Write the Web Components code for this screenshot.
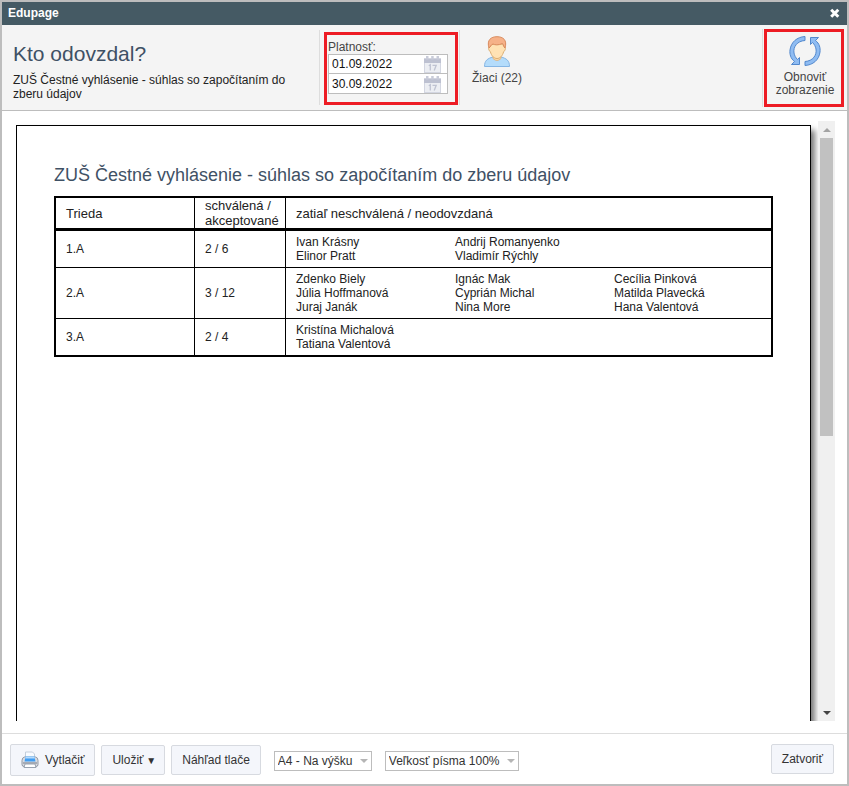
<!DOCTYPE html>
<html lang="sk">
<head>
<meta charset="utf-8">
<title>Edupage</title>
<style>
html, body { height: 100%; margin: 0; }
body { font-family: "Liberation Sans", Arial, sans-serif; font-size: 12px; line-height: 14px; color: #222; }
</style>
</head>
<body>
<report-dialog></report-dialog>

<script>
const define = (name, markup, setup) => {
  const template = document.createElement('template');
  template.innerHTML = '<style>*{box-sizing:border-box}</style>' + markup;
  customElements.define(name, class extends HTMLElement {
    constructor() {
      super();
      this.attachShadow({ mode: 'open' }).append(template.content.cloneNode(true));
    }
    connectedCallback() { if (setup) setup(this, this.shadowRoot); }
  });
};

define('title-bar', `
<style>
:host { display: flex; justify-content: space-between; align-items: center; height: 23px; padding: 0 6px 1px 6px; background: #455a64; color: #fff; flex: none; box-sizing: border-box; }
h1 { margin: 0; font-size: 12px; line-height: 14px; font-weight: bold; }
button { display: flex; border: 0; padding: 0; background: none; color: inherit; }
</style>
<h1><slot></slot></h1>
<button type="button" aria-label="Zavrieť"><svg width="12" height="12" viewBox="0 0 12 12"><path d="M2.2 2.7 9.3 9.8M9.3 2.7 2.2 9.8" stroke="#fff" stroke-width="3"/></svg></button>
`);

define('highlight-frame', `
<style>
:host { display: block; border: 3px solid #ed1c24; box-sizing: border-box; flex: none; }
</style>
<slot></slot>
`);

define('date-field', `
<style>
:host { display: flex; align-items: center; height: 20px; width: 120px; border: 1px solid #bdbdbd; background: #fff; padding: 0 5px 0 3px; box-sizing: border-box; }
:host(:not(:first-of-type)) { height: 21px; margin-top: -1px; }
input { flex: 1; min-width: 0; height: 16px; border: 0; padding: 0; font: inherit; color: #111; background: none; outline: 0; }
svg { flex: none; }
</style>
<input type="text">
<svg width="19" height="18" viewBox="0 0 19 18">
<rect x="1.5" y="4" width="16" height="13.500" fill="#eceef3" stroke="#d3d6e1"/>
<path d="M1 3.500h17V8H1z" fill="#bdc1d1"/>
<path d="M3 1h2.500v3.500H3zM8.200 1h2.500v3.500H8.200zM13.500 1H16v3.500h-2.500z" fill="#c9ccd9"/>
<path d="M5.800 10.800l1.500-1v5.700M9.500 10.300h3.700l-2 5.200" fill="none" stroke="#bfc3d2" stroke-width="1.300"/>
</svg>
`, (host, root) => {
  const input = root.querySelector('input');
  input.value = host.getAttribute('value');
  input.setAttribute('aria-label', host.getAttribute('label'));
});

define('tool-button', `
<style>
:host { display: block; }
button { display: flex; flex-direction: column; align-items: center; gap: 3px; width: 100%; border: 0; padding: 0; background: none; font: inherit; color: #444; line-height: inherit; text-align: center; }
::slotted(svg) { display: block; }
</style>
<button type="button"><slot name="icon"></slot><span><slot></slot></span></button>
`);

define('report-toolbar', `
<style>
:host { display: flex; height: 86px; background: #f4f4f4; border-bottom: 1px solid #bdbdbd; flex: none; box-sizing: border-box; }
.heading { width: 317px; padding: 17px 30px 0 11px; flex: none; }
h2 { margin: 0 0 7px; font-size: 21px; line-height: 24px; font-weight: normal; color: #3f5165; }
p { margin: 0; color: #222; }
.group { border-left: 1px solid #ddd; height: 75px; margin-top: 5px; }
.dates { width: 140px; flex: none; padding: 2px 0 0 4px; }
.dates highlight-frame { width: 134px; height: 73px; padding: 5px 0 0 1px; color: #444; }
.people { flex: 1; padding: 6px 0 0 7px; }
.people tool-button { width: 60px; }
.refresh { width: 85px; flex: none; margin-top: 4px; padding-left: 1px; height: 78px; }
.refresh highlight-frame { width: 80px; height: 78px; padding: 2px 0 0 2px; line-height: 14px; }
.refresh tool-button { line-height: 13px; }
</style>
<div class="heading"><h2>Kto odovzdal?</h2><p>ZUŠ Čestné vyhlásenie - súhlas so započítaním do zberu údajov</p></div>
<div class="group dates"><highlight-frame>Platnosť:<date-field value="01.09.2022" label="Platnosť od"></date-field><date-field value="30.09.2022" label="Platnosť do"></date-field></highlight-frame></div>
<div class="group people"><tool-button>
<svg slot="icon" width="32" height="32" viewBox="0 0 32 32">
<path d="M3.500 30.500c0-6 3-8 8.500-9.500h8c5.500 1.500 8.500 3.500 8.500 9.500z" fill="#b4dcfb" stroke="#86b6e4"/>
<path d="M12 20v2.500q4 4 8 0V20z" fill="#ffdba8" stroke="#dfb076" stroke-width=".8"/>
<path d="M8.500 11c-1.500 0-1 4 .8 4.500C10.500 20 13 22.500 16 22.500s5.500-2.500 6.700-7c1.800-.5 2.300-4.500.8-4.500C22 6 10 6 8.500 11z" fill="#ffe2b4" stroke="#dcae72"/>
<path d="M8 12C5.500 4 10 .7 16 .7S26.500 4 24 12c-1.500-1-1-3-2.500-4.500C17 9.500 14 9 12 8c-2 .5-2.500 3-4 4z" fill="#f6b188" stroke="#d98a5c"/>
</svg>Žiaci (22)</tool-button></div>
<div class="group refresh"><highlight-frame><tool-button>
<svg slot="icon" width="34" height="34" viewBox="0 0 34 34" fill="#8fbcf2" stroke="#5288cd" stroke-linejoin="round">
<path d="M17 2.500v4C9 7 5 13 6 19c.5 2.500 1.500 4.500 3.500 6.500l2-2v7H3.500l3-3C2.500 24.500 1.500 20 2 16 3 8 9 3 17 2.500z"/>
<path d="M17 31.500v-4C25 27 29 21 28 15c-.5-2.500-1.500-4.500-3.500-6.500l-2 2v-7h8l-3 3C31.500 9.500 32.500 14 32 18c-1 8-7 13-15 13.500z"/>
</svg>Obnoviť<br>zobrazenie</tool-button></highlight-frame></div>
`);

const rows = [
  ['1.A', '2 / 6', ['Ivan Krásny', 'Andrij Romanyenko', '', 'Elinor Pratt', 'Vladimír Rýchly', '']],
  ['2.A', '3 / 12', ['Zdenko Biely', 'Ignác Mak', 'Cecília Pinková', 'Júlia Hoffmanová', 'Cyprián Michal', 'Matilda Plavecká', 'Juraj Janák', 'Nina More', 'Hana Valentová']],
  ['3.A', '2 / 4', ['Kristína Michalová', '', '', 'Tatiana Valentová', '', '']]
];

define('class-table', `
<style>
:host { display: block; }
table { width: 100%; table-layout: fixed; border: 2px solid #000; border-spacing: 0; }
th, td { padding: 4px 0 4px 10px; text-align: left; font-weight: normal; vertical-align: middle; border-bottom: 1px solid #000; }
th + th, td + td { border-left: 1px solid #000; }
th { font-size: 13px; line-height: 15px; padding-top: 0; padding-bottom: 0; border-bottom-width: 3px; }
tbody tr:last-child td { border-bottom: 0; }
.class { width: 138px; }
.count { width: 91px; }
.names { display: grid; grid-template-columns: 159px 159px 1fr; }
</style>
<table><colgroup><col class="class"><col class="count"><col></colgroup>
<thead><tr><th>Trieda</th><th>schválená / akceptované</th><th>zatiaľ neschválená / neodovzdaná</th></tr></thead><tbody></tbody></table>
`, (host, root) => {
  root.querySelector('tbody').innerHTML = rows.map(([name, count, people]) =>
    `<tr><td>${name}</td><td>${count}</td><td><div class="names">${people.map(p => `<span>${p}</span>`).join('')}</div></td></tr>`).join('');
});

define('scroll-track', `
<style>
:host { display: flex; flex-direction: column; width: 17px; background: #f0f0f0; flex: none; }
.arrow { height: 17px; display: grid; place-items: center; flex: none; }
.thumb { flex: 10; margin: 0 2px; background: #c1c1c1; }
.space { flex: 9; }
</style>
<div class="arrow"><svg width="8" height="4"><path d="M0 4h8L4 0z" fill="#a3a3a3"/></svg></div>
<div class="thumb"></div><div class="space"></div>
<div class="arrow"><svg width="8" height="4"><path d="M0 0h8L4 4z" fill="#444"/></svg></div>
`);

define('report-preview', `
<style>
:host { display: flex; flex: 1; min-height: 0; padding: 10px 12px 12px 14px; background: #fff; }
.view { flex: 1; min-width: 0; overflow: hidden; padding: 4px 7px 0 0; }
.paper { min-height: 1130px; border: 1px solid #000; padding: 37px; background: #fff; box-shadow: 4px 5px 6px #777; }
h3 { margin: 0 0 9px; font-size: 18px; line-height: 24px; font-weight: normal; color: #3f5165; }
</style>
<div class="view"><div class="paper"><h3>ZUŠ Čestné vyhlásenie - súhlas so započítaním do zberu údajov</h3><class-table></class-table></div></div>
<scroll-track></scroll-track>
`);

define('action-button', `
<style>
:host { display: block; flex: none; }
button { display: flex; align-items: center; gap: 6px; height: 30px; padding: 0 10px; border: 1px solid #d7dae0; border-radius: 2px; background: #f4f6fb; font: inherit; color: #333; white-space: nowrap; }
:host([large]) button { height: 32px; }
:host([menu]) button { padding: 0 8px 0 10px; }
</style>
<button type="button"><slot name="icon"></slot><span><slot></slot></span></button>
`);

define('option-select', `
<style>
:host { display: flex; align-items: center; position: relative; flex: none; }
select { appearance: none; height: 20px; padding: 0 18px 0 3px; border: 1px solid #bdbdbd; border-radius: 0; background: #fff; font: inherit; color: #333; }
svg { position: absolute; right: 4px; pointer-events: none; }
</style>
<select></select><svg width="8" height="4"><path d="M0 0h8L4 4z" fill="#b5b5b5"/></svg>
`, (host, root) => {
  const select = root.querySelector('select');
  select.add(new Option(host.getAttribute('value')));
  select.setAttribute('aria-label', host.getAttribute('label'));
});

define('report-footer', `
<style>
:host { display: flex; align-items: center; gap: 6px; height: 51px; border-top: 1px solid #ddd; padding: 2px 13px 0 8px; background: #fff; flex: none; box-sizing: border-box; }
.options { display: flex; gap: 13px; margin-left: 7px; padding-top: 2px; }
.caret { font-size: 10px; }
.close { margin: 0 0 2px auto; }
</style>
<action-button large><svg slot="icon" width="18" height="18" viewBox="0 0 18 18">
<path d="M4.500 8V1h7l2 2v5z" fill="#f8fbff" stroke="#c3cedb"/>
<path d="M3.500 6h11q2.500.5 2.500 3.500v4q0 2-2 2H3q-2 0-2-2v-4Q1 6.500 3.500 6z" fill="#d9dce2" stroke="#9198a3"/>
<path d="M4.500 5.500h9l1 5h-11z" fill="#3f9df3"/><path d="M4.500 5.500h9l.4 2H4.200z" fill="#b4dafc"/>
<path d="M2 12h14" stroke="#747b86"/><path d="M4 13h10l1 3.500H3z" fill="#fff" stroke="#9aa3b0"/>
</svg>Vytlačiť</action-button>
<action-button menu>Uložiť<span class="caret"> ▼</span></action-button>
<action-button>Náhľad tlače</action-button>
<div class="options"><option-select value="A4 - Na výšku" label="Formát"></option-select><option-select value="Veľkosť písma 100%" label="Veľkosť písma"></option-select></div>
<action-button class="close">Zatvoriť</action-button>
`);

define('report-dialog', `
<style>
:host { display: flex; flex-direction: column; height: 100vh; border: 2px solid #bdbdbd; box-sizing: border-box; }
</style>
<title-bar>Edupage</title-bar><report-toolbar></report-toolbar><report-preview></report-preview><report-footer></report-footer>
`);
</script>
</body>
</html>
